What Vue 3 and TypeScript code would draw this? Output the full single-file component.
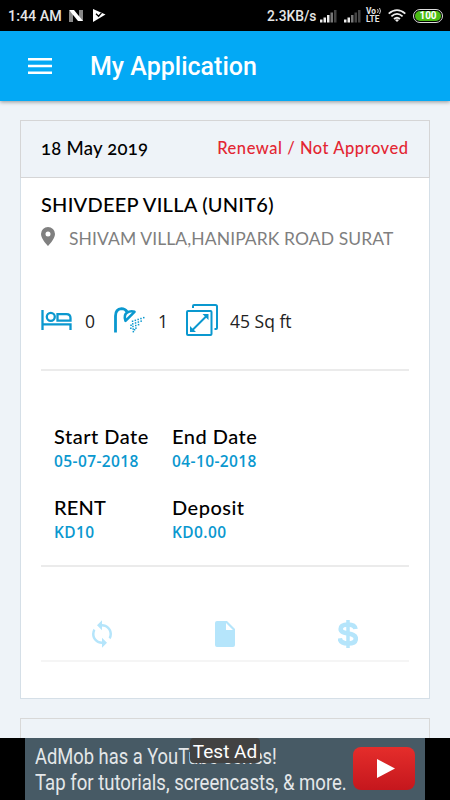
<script setup lang="ts">
interface Detail {
  label: string
  value: string
  cls: string
}

const details: Detail[] = [
  { label: 'Start Date', value: '05-07-2018', cls: 'start' },
  { label: 'End Date', value: '04-10-2018', cls: 'end' },
  { label: 'RENT', value: 'KD10', cls: 'rent' },
  { label: 'Deposit', value: 'KD0.00', cls: 'deposit' },
]

const bars = [3, 5, 7.5, 10, 12.5]

const drops: [number, number][] = []
for (let r = 0; r < 5; r++) {
  for (let c = 0; c < 5 - r; c++) {
    drops.push([20 + c * 2.8 + r * 0.2, 14.5 + r * 2.6 - c * 0.9])
  }
}
drops.push([18.5, 18.5], [18.3, 21.5], [22, 23])
</script>

<template>
  <div class="screen">
    <header class="status">
      <span class="clock">1:44 AM</span>
      <svg class="n-icon" width="14" height="12" viewBox="0 0 14 12">
        <path d="M0 1l4 1v10H0zM10 0h4v11l-4-1z" fill="#888" />
        <path d="M0 0h5l9 11h-5z" fill="#fff" />
      </svg>
      <svg class="p-icon" width="13" height="13" viewBox="0 0 13 13">
        <path d="M0 0l12.5 5.500L0 13z" fill="#fff" />
        <path d="M3 4.800l2.600 2.400L8.500 3.800" fill="none" stroke="#000" stroke-width="1.300" />
      </svg>
      <span class="speed">2.3KB/s</span>
      <svg class="signal" width="17" height="13" viewBox="0 0 17 13">
        <rect v-for="(h, i) in bars" :key="i" :x="i * 3.5" :y="12.5 - h" width="2.5" :height="h" :fill="i < 3 ? '#eee' : i === 3 ? '#777' : '#444'" />
      </svg>
      <svg class="signal second" width="17" height="13" viewBox="0 0 17 13">
        <rect v-for="(h, i) in bars" :key="i" :x="i * 3.5" :y="12.5 - h" width="2.5" :height="h" :fill="i < 2 ? '#eee' : i === 2 ? '#777' : '#444'" />
      </svg>
      <div class="volte">
        <div class="vo">
          <span>Vo</span>
          <svg width="4" height="6" viewBox="0 0 4 6"><path d="M.5 1q1.500 2 0 4M2.500 0q2 3 0 6" fill="none" stroke="#ddd" stroke-width=".9" /></svg>
        </div>
        <span>LTE</span>
      </div>
      <svg class="wifi" width="18" height="13" viewBox="0 0 18 13">
        <g fill="none" stroke="#eee" stroke-width="1.8">
          <path d="M.7 4.6Q9-2.4 17.3 4.6" />
          <path d="M3.4 7.4Q9 2.4 14.6 7.4" />
          <path d="M6 10Q9 7.4 12 10" />
        </g>
        <path d="M7 11l2 2 2-2q-2-1.6-4 0z" fill="#eee" />
      </svg>
      <div class="battery"><span>100</span></div>
    </header>

    <nav class="appbar">
      <svg width="24" height="16" viewBox="0 0 24 16">
        <path d="M0 1.3h24M0 8h24M0 14.7h24" stroke="#fff" stroke-width="2.5" />
      </svg>
      <h1>My Application</h1>
    </nav>

    <main class="content">
      <article class="card">
        <div class="card-head">
          <span class="date">18 May 2019</span>
          <span class="state">Renewal / Not Approved</span>
        </div>
        <div class="card-body">
          <h2>SHIVDEEP VILLA (UNIT6)</h2>
          <div class="address">
            <svg width="14" height="19" viewBox="0 0 14 19">
              <path d="M7 0a7 7 0 0 0-7 7c0 5 7 12 7 12s7-7 7-12a7 7 0 0 0-7-7zm0 9.4a2.5 2.5 0 1 1 0-5 2.5 2.5 0 0 1 0 5z" fill="#808080" />
            </svg>
            <span>SHIVAM VILLA,HANIPARK ROAD SURAT</span>
          </div>

          <div class="features">
            <svg class="bed" width="32" height="20" viewBox="0 0 32 20" fill="none" stroke="#0a98cf" stroke-width="2.3">
              <path d="M1.500 0v20M1.500 14.400h28V20" />
              <circle cx="9.8" cy="6.8" r="4" />
              <path d="M16.500 4.100h9q4 0 4 4v2.600h-13z" />
            </svg>
            <span class="n-bed">0</span>
            <svg class="shower" width="32" height="26" viewBox="0 0 32 26" fill="none" stroke="#0a98cf">
              <path d="M2.500 25.500V9Q2.500 2 8.500 1.600q3.500 0 5.500 3" stroke-width="2.800" />
              <path d="M12.500 13.800Q10.500 8 14 5.700T21.500 4.800z" stroke-width="2.600" stroke-linejoin="round" />
              <rect v-for="([x, y], i) in drops" :key="i" :x="x - 1.2" :y="y - 1" width="1.500" height="1.500" fill="#0a98cf" stroke="none" />
            </svg>
            <span class="n-bath">1</span>
            <svg class="area" width="32" height="32" viewBox="0 0 32 32" fill="none" stroke="#0a98cf" stroke-width="2">
              <rect x="1" y="7" width="24.5" height="24" rx="1" />
              <path d="M7 4V2q0-1 1-1h21.500q1.500 0 1.500 1.500V24q0 1-1 1h-1.500" />
              <path d="M5.500 27L21 11.500" />
              <path d="M16.500 10h6v6zM4 22v6h6z" fill="#0a98cf" stroke="none" />
            </svg>
            <span class="n-area">45 Sq ft</span>
          </div>

          <div class="details">
            <div v-for="d in details" :key="d.label" class="detail" :class="d.cls">
              <div class="label">{{ d.label }}</div>
              <div class="value">{{ d.value }}</div>
            </div>
          </div>

          <div class="actions">
            <svg width="30" height="30" viewBox="0 0 24 24" preserveAspectRatio="none" class="sync">
              <path d="M12 4V1L8 5l4 4V6c3.310 0 6 2.690 6 6 0 1.010-.250 1.970-.700 2.800l1.460 1.460A7.930 7.930 0 0 0 20 12c0-4.420-3.580-8-8-8zm0 14c-3.310 0-6-2.690-6-6 0-1.010.250-1.970.700-2.800L5.240 7.740A7.930 7.930 0 0 0 4 12c0 4.420 3.580 8 8 8v3l4-4-4-4v3z" />
            </svg>
            <svg width="20" height="26" viewBox="0 0 20 26" class="doc">
              <path d="M2 0h10l8 8v16a2 2 0 0 1-2 2H2a2 2 0 0 1-2-2V2a2 2 0 0 1 2-2zm9 2v7h7z" fill-rule="evenodd" />
            </svg>
            <svg width="20" height="28" viewBox="0 0 20 28" class="dollar">
              <path d="M17.500 9C17 5.800 14.500 4.500 10 4.500c-4.500 0-7.300 1.600-7.300 4.500 0 6.500 15.100 2.600 15.100 9.500 0 3.200-3 5-7.800 5-4.900 0-7.800-1.700-8.200-5.200" />
              <path d="M10 0v28" stroke-width="3.500" />
            </svg>
          </div>
        </div>
      </article>
      <article class="card next"></article>
    </main>

    <footer class="banner">
      <div class="ad">
        <div class="ad-copy">
          <div class="l1">AdMob has a YouTube series!</div>
          <div class="l2">Tap for tutorials, screencasts, &amp; more.</div>
        </div>
        <div class="play">
          <svg width="18" height="19" viewBox="0 0 18 19"><path d="M0 0l18 9.500L0 19z" fill="#fff" /></svg>
        </div>
      </div>
      <span class="test">Test Ad</span>
    </footer>
  </div>
</template>

<style>
body {
  margin: 0;
  overflow: hidden;
}
</style>

<style scoped>
* {
  box-sizing: border-box;
}
.screen {
  width: 450px;
  height: 800px;
  overflow: hidden;
  display: flex;
  flex-direction: column;
  background: #eef3f8;
  font-family: Lato, sans-serif;
  white-space: nowrap;
}
.status {
  height: 31px;
  flex: none;
  background: #000;
  color: #e6e6e6;
  display: flex;
  align-items: center;
  padding-left: 8px;
  font: 500 14.300px/32px Roboto, sans-serif;
}
.clock { width: 61px; }
.n-icon { margin-right: 10px; }
.speed {
  margin-left: 161px;
  width: 53px;
  font-size: 13.800px;
}
.signal { margin-top: 2px; }
.second { margin-left: 7px; }
.volte {
  display: flex;
  flex-direction: column;
  width: 16px;
  margin-left: 5px;
  font: 700 8.300px/7.500px Roboto, sans-serif;
}
.vo {
  display: flex;
  height: 7.500px;
  gap: 1px;
}
.wifi { margin-left: 6px; }
.battery {
  width: 30px;
  height: 14px;
  margin-left: 7px;
  border: 1.500px solid #ddd;
  border-radius: 7px;
  background: #000;
  padding: 1px;
}
.battery span {
  display: block;
  height: 10px;
  border-radius: 5px;
  background: #4bbd14;
  color: #fff;
  text-align: center;
  font: 700 10px/10px Roboto, sans-serif;
}
.appbar {
  height: 70px;
  flex: none;
  background: #03a9f5;
  display: flex;
  align-items: center;
  padding-left: 28px;
  box-shadow: 0 1px 4px rgba(0, 0, 0, 0.4);
}
h1 {
  margin: 2px 0 0 38px;
  color: #fff;
  font: 500 25px/32px Roboto, sans-serif;
}
.content {
  flex: 1;
  min-height: 0;
  overflow: hidden;
  padding: 19px 20px 0;
}
.card {
  height: 579px;
  border: 1px solid #d5dfe7;
  background: #fff;
}
.card.next {
  margin-top: 19px;
  border-color: #d8d8d8;
  background: #eef3f8;
}
.card-head {
  height: 58px;
  margin: -1px -1px 0;
  border: 1px solid #d5d5d6;
  border-bottom-width: 1.500px;
  background: #eef3f8;
  display: flex;
  justify-content: space-between;
  align-items: center;
  padding: 0 21px 2px 20px;
}
.date {
  font-size: 18.500px;
  font-weight: 500;
  letter-spacing: 0.250px;
  font-variant-numeric: oldstyle-nums;
}
.state {
  color: #e32633;
  font-size: 16.500px;
  font-weight: 500;
  letter-spacing: 0.530px;
  margin-right: -0.500px;
}
.card-body { padding: 0 20px; }
h2 {
  margin: 0;
  height: 40px;
  padding-top: 14px;
  font: 500 20px/24px Lato, sans-serif;
  letter-spacing: 0.240px;
}
.address {
  display: flex;
  align-items: center;
  height: 40px;
  color: #7f7f7f;
  font-size: 17.500px;
  letter-spacing: 0.090px;
}
.address svg { margin: -3px 14px 0 0; }
.features {
  height: 113px;
  padding: 46px 0 0;
  border-bottom: 2px solid #ebebeb;
  display: flex;
  align-items: flex-start;
  color: #222;
  font: 400 17.500px/34px "Open Sans", sans-serif;
}
.bed { margin: 6px 12px 0 0; }
.n-bed { width: 28px; }
.shower { margin: 3px 13px 0 0; }
.n-bath { width: 28px; }
.area { margin: 0 12px 0 0; }
.details {
  height: 196px;
  padding: 53px 0 0 13px;
  border-bottom: 2px solid #ebebeb;
  display: grid;
  grid-template-columns: 118px 1fr;
  grid-template-rows: 71px 71px;
}
.label {
  font-size: 20px;
  line-height: 25px;
  font-weight: 500;
  letter-spacing: 0.500px;
}
.rent .label { letter-spacing: 0.200px; }
.value {
  color: #0a98cf;
  font: 600 15.500px/24px "Open Sans", sans-serif;
  letter-spacing: 0.400px;
}
.actions {
  height: 95px;
  border-bottom: 2px solid #f5f5f5;
  display: flex;
  padding: 53px 0 0 46px;
  fill: #b5e5fb;
}
.sync { margin-top: -1px; }
.doc { margin: 1px 103px 0 98px; }
.dollar {
  fill: none;
  stroke: #b5e5fb;
  stroke-width: 4.600;
}
.banner {
  position: relative;
  height: 62px;
  flex: none;
  background: #000;
  padding: 0 25px;
}
.ad {
  height: 62px;
  display: flex;
  justify-content: space-between;
  background: #475a65;
  padding: 0 10px;
}
.ad-copy {
  width: 300px;
  padding-top: 6px;
  color: #e4e7e9;
  font: 400 22px/26px Roboto, sans-serif;
}
.l1, .l2 {
  width: max-content;
  transform: scaleX(0.833);
  transform-origin: left;
}
.l2 { transform: scaleX(0.844); }
.play {
  width: 62px;
  height: 43px;
  margin-top: 9px;
  border-radius: 8px;
  background: linear-gradient(#e52d2b, #c5171d);
  display: flex;
  align-items: center;
  padding-left: 24px;
}
.test {
  position: absolute;
  left: 190px;
  top: 0;
  width: 70px;
  height: 25px;
  border-radius: 4px;
  background: #424242;
  color: #fff;
  text-align: center;
  font: 400 19px/27px Roboto, sans-serif;
}
</style>
